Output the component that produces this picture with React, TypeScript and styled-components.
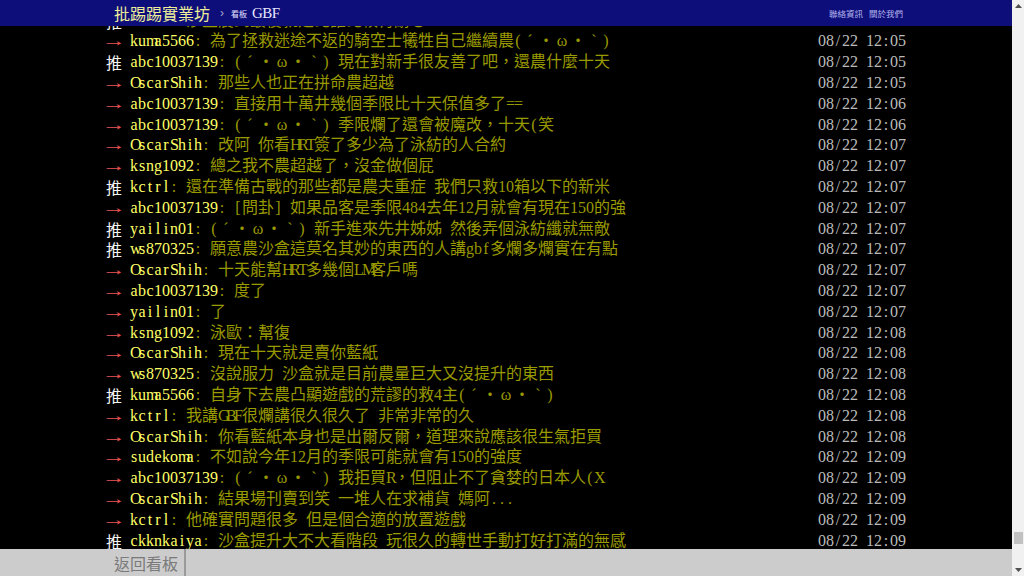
import React from "react";
import styled, { createGlobalStyle } from "styled-components";

const GlobalStyle = createGlobalStyle`
  html, body {
    margin: 0;
    padding: 0;
    background: #000;
    overflow: hidden;
  }
  body {
    font-family: "Liberation Serif", "Noto Sans CJK TC", serif;
  }
`;

type Tag = "推" | "→";
type PushData = [Tag, string, string, string];

const PUSHES: PushData[] = [
  ["推", "kctrl", "沙盒農到最後就是比誰比較有耐心", "08/22 12:04"],
  ["→", "kuma5566", "為了拯救迷途不返的騎空士犧牲自己繼續農(ˊ・ω・ˋ)", "08/22 12:05"],
  ["推", "abc10037139", "(ˊ・ω・ˋ) 現在對新手很友善了吧，還農什麼十天", "08/22 12:05"],
  ["→", "OscarShih", "那些人也正在拼命農超越", "08/22 12:05"],
  ["→", "abc10037139", "直接用十萬井幾個季限比十天保值多了==", "08/22 12:06"],
  ["→", "abc10037139", "(ˊ・ω・ˋ) 季限爛了還會被魔改，十天(笑", "08/22 12:06"],
  ["→", "OscarShih", "改阿 你看HRT簽了多少為了泳紡的人合約", "08/22 12:07"],
  ["→", "ksng1092", "總之我不農超越了，沒金做個屁", "08/22 12:07"],
  ["推", "kctrl", "還在準備古戰的那些都是農夫重症 我們只救10箱以下的新米", "08/22 12:07"],
  ["→", "abc10037139", "[問卦] 如果品客是季限484去年12月就會有現在150的強", "08/22 12:07"],
  ["推", "yailin01", "(ˊ・ω・ˋ) 新手進來先井姊姊 然後弄個泳紡纖就無敵", "08/22 12:07"],
  ["推", "ws870325", "願意農沙盒這莫名其妙的東西的人講gbf多爛多爛實在有點", "08/22 12:07"],
  ["→", "OscarShih", "十天能幫HRT多幾個LM客戶嗎", "08/22 12:07"],
  ["→", "abc10037139", "度了", "08/22 12:07"],
  ["→", "yailin01", "了", "08/22 12:07"],
  ["→", "ksng1092", "泳歐：幫復", "08/22 12:08"],
  ["→", "OscarShih", "現在十天就是賣你藍紙", "08/22 12:08"],
  ["→", "ws870325", "沒說服力 沙盒就是目前農量巨大又沒提升的東西", "08/22 12:08"],
  ["推", "kuma5566", "自身下去農凸顯遊戲的荒謬的救4主(ˊ・ω・ˋ)", "08/22 12:08"],
  ["→", "kctrl", "我講GBF很爛講很久很久了 非常非常的久", "08/22 12:08"],
  ["→", "OscarShih", "你看藍紙本身也是出爾反爾，道理來說應該很生氣拒買", "08/22 12:08"],
  ["→", "sudekoma", "不如說今年12月的季限可能就會有150的強度", "08/22 12:09"],
  ["→", "abc10037139", "(ˊ・ω・ˋ) 我拒買R，但阻止不了貪婪的日本人(X", "08/22 12:09"],
  ["→", "OscarShih", "結果場刊賣到笑 一堆人在求補貨 媽阿...", "08/22 12:09"],
  ["→", "kctrl", "他確實問題很多 但是個合適的放置遊戲", "08/22 12:09"],
  ["推", "ckknkaiya", "沙盒提升大不大看階段 玩很久的轉世手動打好打滿的無感", "08/22 12:09"],
];

/* ---------- frame ---------- */

const Frame = styled.div`
  display: flex;
  height: 100vh;
  width: 100vw;
`;

const Main = styled.div`
  flex: 1;
  min-width: 0;
  display: flex;
  flex-direction: column;
`;

/* ---------- top bar ---------- */

const TopBar = styled.header`
  flex: 0 0 26px;
  background: #0e0e7a;
  position: relative;
  z-index: 1;
`;

const BarInner = styled.div`
  width: 800px;
  margin: 0 auto;
  height: 100%;
  display: flex;
  align-items: center;
`;

const Logo = styled.span`
  margin-left: 8px;
  font-family: "Noto Sans CJK TC", sans-serif;
  font-size: 16px;
  line-height: 26px;
  color: #eeee9a;
`;

const Crumb = styled.span`
  margin-left: 10px;
  font-family: "Liberation Sans", sans-serif;
  font-size: 12px;
  color: #aaaacc;
`;

const BoardLabel = styled.span`
  margin-left: 7px;
  font-family: "Noto Sans CJK TC", sans-serif;
  font-size: 8px;
  color: #e0e0ff;
`;

const BoardName = styled.span`
  margin-left: 5px;
  font-family: "Liberation Serif", serif;
  font-size: 15px;
  color: #e8e8ff;
  letter-spacing: -0.5px;
`;

const TopLinks = styled.nav`
  margin-left: auto;
  margin-right: 3px;
  display: flex;
  gap: 6px;
`;

const TopLink = styled.span`
  font-family: "Noto Sans CJK TC", sans-serif;
  font-size: 8.5px;
  color: #b4b4ee;
`;

/* ---------- feed ---------- */

const Feed = styled.main`
  flex: 1;
  min-height: 0;
  overflow: hidden;
  margin-bottom: -2.4px;
  display: flex;
  flex-direction: column;
  justify-content: flex-end;
`;

const PushList = styled.div`
  width: 800px;
  margin: 0 auto;
`;

const Row = styled.div`
  display: flex;
  height: 20.8px;
  font-size: 16px;
  line-height: 20.8px;
  white-space: nowrap;
`;

const TagGlyph = styled.span<{ $kind: Tag }>`
  display: inline-block;
  vertical-align: top;
  width: 16px;
  text-align: center;
  font-family: ${({ $kind }) =>
    $kind === "推" ? '"Noto Sans CJK TC", sans-serif' : '"Liberation Serif", serif'};
  color: ${({ $kind }) => ($kind === "推" ? "#f4f4f4" : "#ee5555")};
  transform: ${({ $kind }) => ($kind === "推" ? "none" : "scaleX(1.5)")};
`;

const UserPart = styled.span`
  color: #ffff66;
`;

const ContentPart = styled.span`
  color: #999900;
`;

const TimePart = styled.span`
  margin-left: auto;
  color: #bbbbbb;
`;

const Glyph = styled.span<{ $wide: boolean }>`
  display: inline-block;
  vertical-align: top;
  width: ${({ $wide }) => ($wide ? "16px" : "8px")};
  text-align: center;
  white-space: pre;
`;

/* ---------- bottom bar ---------- */

const BottomBar = styled.footer`
  flex: 0 0 27px;
  background: #cccccc;
  position: relative;
  z-index: 1;
`;

const BackButton = styled.a`
  display: flex;
  align-items: center;
  height: 100%;
  padding: 0 6px 0 8px;
  border-right: 2px solid #9a9a9a;
  font-family: "Noto Sans CJK TC", sans-serif;
  font-size: 16px;
  color: #7a7a7a;
  text-decoration: none;
`;

/* ---------- scrollbar ---------- */

const ScrollBar = styled.div`
  flex: 0 0 12px;
  background: #f1f1f1;
  display: flex;
  flex-direction: column;
`;

const ScrollArrow = styled.div`
  flex: 0 0 12px;
  display: flex;
  align-items: center;
  justify-content: center;
`;

const ScrollTrack = styled.div`
  flex: 1;
  display: flex;
  flex-direction: column;
  justify-content: flex-end;
  align-items: center;
  padding-bottom: 20px;
`;

const ScrollThumb = styled.div`
  width: 9px;
  height: 12px;
  background: #c1c1c1;
`;

function Arrow({ up }: { up: boolean }) {
  return (
    <svg width="7" height="4" viewBox="0 0 7 4">
      <path d={up ? "M0 4 L3.5 0 L7 4 Z" : "M0 0 L7 0 L3.5 4 Z"} fill="#505050" />
    </svg>
  );
}

/* ---------- parts ---------- */

function Mono({ text }: { text: string }) {
  return (
    <>
      {Array.from(text).map((ch, i) => (
        <Glyph key={i} $wide={(ch.codePointAt(0) ?? 0) > 0xff}>
          {ch}
        </Glyph>
      ))}
    </>
  );
}

function Push({ data }: { data: PushData }) {
  const [tag, user, content, time] = data;
  return (
    <Row>
      <TagGlyph $kind={tag}>{tag}</TagGlyph>
      <Glyph $wide={false}> </Glyph>
      <UserPart>
        <Mono text={user} />
      </UserPart>
      <ContentPart>
        <Mono text={": " + content} />
      </ContentPart>
      <TimePart>
        <Mono text={" " + time} />
      </TimePart>
    </Row>
  );
}

export default function App() {
  return (
    <>
      <GlobalStyle />
      <Frame>
        <Main>
          <TopBar>
            <BarInner>
              <Logo>批踢踢實業坊</Logo>
              <Crumb>›</Crumb>
              <BoardLabel>看板</BoardLabel>
              <BoardName>GBF</BoardName>
              <TopLinks>
                <TopLink>聯絡資訊</TopLink>
                <TopLink>關於我們</TopLink>
              </TopLinks>
            </BarInner>
          </TopBar>
          <Feed>
            <PushList>
              {PUSHES.map((p, i) => (
                <Push key={i} data={p} />
              ))}
            </PushList>
          </Feed>
          <BottomBar>
            <BarInner>
              <BackButton href="#">返回看板</BackButton>
            </BarInner>
          </BottomBar>
        </Main>
        <ScrollBar>
          <ScrollArrow>
            <Arrow up />
          </ScrollArrow>
          <ScrollTrack>
            <ScrollThumb />
          </ScrollTrack>
          <ScrollArrow>
            <Arrow up={false} />
          </ScrollArrow>
        </ScrollBar>
      </Frame>
    </>
  );
}
